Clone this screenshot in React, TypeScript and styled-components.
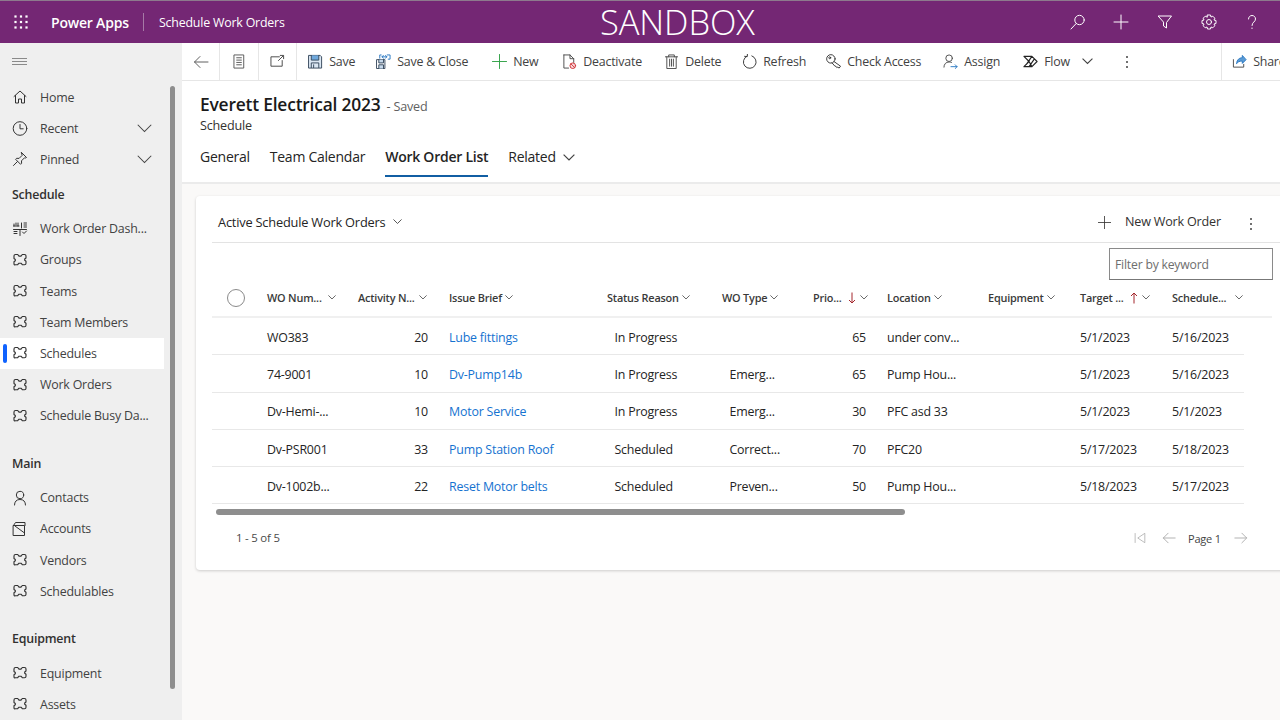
import React from "react";
import styled, { createGlobalStyle } from "styled-components";

const Global = createGlobalStyle`
  html, body { margin: 0; padding: 0; height: 100%; overflow: hidden; background: #faf9f8; }
  #root { height: 720px; width: 1280px; overflow: hidden; }
  * { box-sizing: border-box; }
`;

const Page = styled.div`
  width: 1280px; height: 720px; display: flex; flex-direction: column; overflow: hidden;
  font-family: "Open Sans", "Noto Sans", sans-serif; color: #242424; letter-spacing: -0.2px;
`;
const TopBar = styled.header`
  height: 43px; flex: none; background: #742774; border-top: 1px solid #8d7a8d; color: #fff;
  display: flex; align-items: center; position: relative;
`;
const Waffle = styled.div`width: 43px; display: flex; justify-content: center; margin-left: -1px; margin-right: 9px;`;
const Brand = styled.div`font-size: 14px; font-weight: 600; width: 92px;`;
const TopSep = styled.div`width: 1px; height: 18px; background: #a67aa6;`;
const AppName = styled.div`font-size: 12.4px; margin-left: 15px;`;
const Sandbox = styled.div`
  position: absolute; left: 600px; top: 2px; font-size: 34.5px; line-height: 38px; font-weight: 300; letter-spacing: -0.1px;
`;
const TopIcons = styled.div`margin-left: auto; display: flex; margin-right: 6px;`;
const TopIcon = styled.div`width: 43.6px; height: 42px; display: flex; align-items: center; justify-content: center;`;

const Body = styled.div`flex: 1; display: flex; min-height: 0;`;
const Side = styled.nav`width: 182px; flex: none; background: #efefef; position: relative; overflow: hidden; color: #424242;`;
const Burger = styled.div`height: 38.5px; padding-left: 12px; display: flex; align-items: center;`;
const NavRow = styled.div<{ $active?: boolean }>`
  height: 31.2px; width: 164px; display: flex; align-items: center; font-size: 12.4px; position: relative;
  padding-left: 12px; background: ${p => (p.$active ? "#fff" : "transparent")};
  ${p => p.$active ? `&::before { content: ""; position: absolute; left: 3px; top: 6px; width: 4px; height: 19px; border-radius: 2px; background: #0f62fe; }` : ""}
`;
const NavIcon = styled.span`width: 16px; height: 16px; margin-right: 12px; display: flex; align-items: center; justify-content: center; flex: none; color: #333;`;
const NavChevron = styled.span`margin-left: auto; margin-right: 12px; display: flex;`;
const NavHead = styled.div<{ $gap?: boolean }>`
  height: 38px; margin-top: ${p => (p.$gap ? 12.7 : 0)}px; padding-left: 12px; display: flex; align-items: center; font-size: 12.4px; font-weight: 600; color: #323130;
`;
const SideThumb = styled.div`position: absolute; left: 170px; top: 43px; width: 5px; height: 603px; border-radius: 3px; background: #8e8e8e;`;

const Main = styled.main`flex: 1; min-width: 0; display: flex; flex-direction: column; overflow: hidden;`;
const CmdBar = styled.div`
  height: 38px; flex: none; background: #fff; border-bottom: 1px solid #e6e6e6; display: flex; align-items: center; color: #424242; font-size: 12.4px;
`;
const NavBtn = styled.div`
  width: 38.4px; height: 37px; border-right: 1px solid #e6e6e6; display: flex; align-items: center; justify-content: center; flex: none;
`;
const CmdList = styled.div`display: flex; align-items: center; margin-left: 11px; flex: none; width: 914px;`;
const Cmd = styled.div<{ $w: number }>`width: ${p => p.$w}px; flex: none; display: flex; align-items: center; gap: 6px; white-space: nowrap;`;
const CmdChevron = styled.span`display: flex; margin-left: 6px;`;
const ShareCell = styled.div`
  height: 37px; border-left: 1px solid #e6e6e6; margin-left: -1px; padding-left: 10px; display: flex; align-items: center; gap: 6px; white-space: nowrap;
`;

const FormHead = styled.div`height: 103px; flex: none; background: #fff; border-bottom: 2px solid #ebebeb; padding: 11px 0 0 18px;`;
const TitleRow = styled.div`display: flex; align-items: baseline; height: 26px; margin-top: -1px;`;
const Title = styled.h1`margin: 0; font-size: 17.4px; font-weight: 600; color: #1a1a1a; line-height: 26px;`;
const Saved = styled.span`font-size: 12.6px; color: #616161; margin-left: 6px;`;
const Entity = styled.div`font-size: 12.6px; font-weight: 500; color: #323130; line-height: 18px;`;
const Tabs = styled.div`display: flex; gap: 20px; margin-top: 8px; height: 34px; font-size: 14px;`;
const Tab = styled.div<{ $on?: boolean }>`
  position: relative; height: 34px; display: flex; align-items: flex-start; gap: 7px; line-height: 20px; padding-top: 4px; color: #242424; font-weight: ${p => (p.$on ? 600 : 400)};
  letter-spacing: -0.25px;
  ${p => p.$on ? `&::after { content: ""; position: absolute; left: 0; right: 0; bottom: 0; height: 2px; background: #115ea3; }` : ""}
`;
const TabChevron = styled.span`display: flex; margin-top: 7px;`;

const Content = styled.div`flex: 1; background: #faf9f8; padding: 12px 0 0 14px; overflow: hidden;`;
const Card = styled.section`
  width: 1110px; height: 374px; background: #fff; border-radius: 4px 0 0 4px; box-shadow: 0 1px 3px rgba(0,0,0,.18); padding: 0 0 0 16px; position: relative;
`;
const CardHead = styled.div`
  height: 47px; border-bottom: 1px solid #e3e3e3; display: flex; align-items: center; padding: 5px 0 0 6px; font-size: 12.8px; color: #242424;
`;
const ViewName = styled.div`font-weight: 500; display: flex; align-items: center; gap: 8px;`;
const NewBtn = styled.div`position: absolute; left: 902px; top: 17px; display: flex; align-items: center; gap: 14px; color: #323130; font-size: 12.6px; line-height: 18px;`;
const CardMore = styled.div`position: absolute; left: 1053px; top: 21px; display: flex;`;
const FilterBox = styled.div`
  position: absolute; left: 913px; top: 52px; width: 164px; height: 32px; border: 1px solid #8a8a8a; border-bottom-color: #777; padding-left: 5px; display: flex; align-items: center; font-size: 12.2px; color: #6e6e6e; background: #fff;
`;
const Grid = styled.div`margin-top: 37px; width: 1032px;`;
const columns = "44px 91px 91px 158px 115px 91px 74px 101px 92px 92px 83px";
const HeadRow = styled.div`
  display: grid; grid-template-columns: ${columns}; height: 38px; width: 1060px; border-bottom: 2px solid #f0f0f0; padding-bottom: 1px; font-size: 10.9px; font-weight: 600; color: #3a3a3a; align-items: center;
`;
const HeadCell = styled.div`padding-left: 11px; display: flex; align-items: center; white-space: nowrap; position: relative;`;
const CheckCell = styled.div`display: flex; padding-left: 15px; align-items: center;`;
const Round = styled.div`width: 18px; height: 18px; border: 1px solid #8a8a8a; border-radius: 50%;`;
const Row = styled.div`
  display: grid; grid-template-columns: ${columns}; height: 37.3px; border-bottom: 1px solid #e8e8e8; font-size: 12.4px; color: #242424; align-items: center; padding-top: 2px;
`;
const Cell = styled.div<{ $indent?: boolean; $num?: boolean; $link?: boolean }>`
  white-space: nowrap; padding-left: ${p => (p.$indent ? "18.5px" : "11px")}; ${p => p.$num ? "text-align: right; padding-right: 10px;" : ""}
  color: ${p => (p.$link ? "#1572d0" : "inherit")};
`;
const HScroll = styled.div`width: 689px; height: 6px; border-radius: 3px; background: #8e8e8e; margin: 5px 0 0 4px;`;
const Pager = styled.div`
  position: absolute; left: 0; right: 0; top: 333px; display: flex; align-items: center; font-size: 11.4px; color: #4a4a4a;
`;
const Range = styled.div`margin-left: 40px; line-height: 18px;`;
const PageBtns = styled.div`position: absolute; left: 938px; top: 0; display: flex; align-items: center; font-size: 11px;`;
const PageLabel = styled.div`margin: 2px 13px 0 12px; color: #444;`;

const I = ({ s = 16, c = "currentColor", w = 1, children }: { s?: number; c?: string; w?: number; children: React.ReactNode }) => (
  <svg width={s} height={s} viewBox="0 0 16 16" fill="none" stroke={c} strokeWidth={w} strokeLinecap="round" strokeLinejoin="round">{children}</svg>
);
const Chevron = ({ s = 10, c = "#424242" }: { s?: number; c?: string }) => (
  <svg width={s} height={s * 0.6} viewBox="0 0 10 6" fill="none" stroke={c} strokeWidth={s > 12 ? 0.7 : 1}><path d="M.5.5 5 5 9.5.5" /></svg>
);
const Puzzle = () => (
  <I w={1.15}><path d="M3.500 2.500h2.200l1.300 1.600h2l1.300-1.600h2.200q1.500 0 1.500 1.500v2l-1.300 1v1.200l1.300 1v2q0 1.500-1.500 1.500h-2.200l-1.300-1.500h-2l-1.300 1.500H3.500Q2 13.200 2 11.700v-2l1.300-1V7.500L2 6.500V4q0-1.500 1.500-1.500Z" /></I>
);
const Home = () => <I><path d="M2 7.500 8 2l6 5.500M3.500 6.500V14h3v-4h3v4h3V6.500" /></I>;
const Clock = () => <I s={17}><circle cx="8" cy="8" r="6.800" /><path d="M8 4v4.300h3.200" /></I>;
const Pin = () => <I><path d="M9.500 1.500 14.500 6.500l-1 .5-1-.2-3 3 .1 2.500-1 1-5-5 1-1 2.500.1 3-3-.2-1ZM5.500 10.500 1.500 14.500" /></I>;
const Dash = () => <I><path d="M1.500 5h5.500M1.500 8.500h13M9.500 2v5M12 2h2.500M12 4h2.500M12 6h2.500M4 2v2M2 3v2M6 2v3M2 10.500h3M2 12.500h3M8 9v5.500M10.500 11l1.500 1.500 2.500-2.500" /></I>;
const Person = () => <I><circle cx="8" cy="5" r="3.700" /><path d="M2.500 15c0-3.500 2-5.500 5.500-5.500s5.500 2 5.500 5.500" /></I>;
const Account = () => <I><path d="M1.500 4.500h11v10h-11zM1.500 4.500l2-3h9.500v3M3 5l9.500 7" /></I>;

const commandItems: { label: string; w: number; icon: React.ReactNode; after?: React.ReactNode }[] = [
  { label: "Save", w: 68, icon: <I s={15}><path d="M1 1.500h12l1.500 1.500v12H1z" stroke="#35475c" fill="#dbe7f3" /><path d="M3.500 1.500v5h8v-5" fill="#6fa8dc" stroke="#35475c" /><path d="M3.500 14.500V9.500h8v5M6 11.500v3" stroke="#35475c" /></I> },
  { label: "Save & Close", w: 116, icon: <I s={15}><path d="M1 6h8.500v9.500H1z" stroke="#35475c" /><path d="M3 6v3.500h5V6M3 15.500v-4h5v4" stroke="#35475c" fill="#c6d8ea" /><path d="M4 4.500V1h1.500M12 1h3v4.500h-2M6.500 3h5M7.800 1.500 6.500 3l1.300 1.500M10.200 1.500 11.500 3l-1.300 1.500" stroke="#2b79c2" /></I> },
  { label: "New", w: 70, icon: <I s={15}><path d="M8 .5v15M.5 8h15" stroke="#2ea043" /></I> },
  { label: "Deactivate", w: 102, icon: <I s={15}><path d="M2 1h6.500L12.500 5v4M2 1v14h5M8.500 1v4h4" stroke="#4a4a4a" /><circle cx="11.500" cy="12.500" r="3" stroke="#d13438" fill="#f8d7da" /><path d="m9.500 10.500 4 4" stroke="#d13438" /></I> },
  { label: "Delete", w: 78, icon: <I s={15}><path d="M1.500 3h13M5 3V1h6v2M3 3v12.500h10V3M6 5.500v7.500M8 5.500v7.500M10 5.500v7.500" stroke="#4a4a4a" /></I> },
  { label: "Refresh", w: 84, icon: <I s={15}><path d="M5.500 2.200A6.800 6.800 0 1 0 10.500 2M5.800 0 5.500 2.800 2.800 2.500" stroke="#333" /></I> },
  { label: "Check Access", w: 117, icon: <I s={15}><circle cx="5.200" cy="5.200" r="4.500" stroke="#333" /><circle cx="4" cy="4" r="1" stroke="#333" /><path d="m8.500 8 7 5-1.500 2-1.500-1-1 .5-1-1.500-1 0-3-3.500" stroke="#333" /></I> },
  { label: "Assign", w: 80, icon: <I s={15}><circle cx="6.500" cy="4.500" r="3.500" stroke="#4a4a4a" /><path d="M1 14c0-3 2-5.500 5.500-5.500 1 0 1.700.200 2.500.500" stroke="#4a4a4a" /><path d="M8.500 13.500h6.500M13 11.500l2 2-2 2" stroke="#2b79c2" /></I> },
  { label: "Flow", w: 102, icon: <I s={15} w={1.2}><path d="M1 2.500h8.500l5.500 5.500-5.500 5.500H1l5.500-5.500zM9.500 2.500 3.800 10.800M9.500 13.500 6.500 8M12 5.500 6.500 13.500" stroke="#222" /></I>,
    after: <CmdChevron><Chevron s={11} /></CmdChevron> },
];

const rows = [
  ["WO383", "20", "Lube fittings", "In Progress", "", "65", "under conv...", "", "5/1/2023", "5/16/2023"],
  ["74-9001", "10", "Dv-Pump14b", "In Progress", "Emerg...", "65", "Pump Hou...", "", "5/1/2023", "5/16/2023"],
  ["Dv-Hemi-...", "10", "Motor Service", "In Progress", "Emerg...", "30", "PFC asd 33", "", "5/1/2023", "5/1/2023"],
  ["Dv-PSR001", "33", "Pump Station Roof", "Scheduled", "Correct...", "70", "PFC20", "", "5/17/2023", "5/18/2023"],
  ["Dv-1002b...", "22", "Reset Motor belts", "Scheduled", "Preven...", "50", "Pump Hou...", "", "5/18/2023", "5/17/2023"],
];

const HeadGap = styled.span<{ $w: number }>`width: ${p => p.$w}px;`;
const PageGap = styled.span`width: 16px;`;
const SortArrow = styled.svg`margin-left: 5px; margin-right: 3px;`;

const heads: { t: string; gap: number; arrow?: "up" | "down" }[] = [
  { t: "WO Num...", gap: 6 }, { t: "Activity N...", gap: 4 }, { t: "Issue Brief", gap: 3 }, { t: "Status Reason", gap: 3 }, { t: "WO Type", gap: 3 },
  { t: "Prio...", gap: 3, arrow: "down" }, { t: "Location", gap: 3 }, { t: "Equipment", gap: 3 }, { t: "Target ...", gap: 3, arrow: "up" }, { t: "Schedule...", gap: 9 },
];

const Arrow = ({ dir }: { dir: "up" | "down" }) => (
  <SortArrow width="10" height="12" viewBox="0 0 10 12" fill="none" stroke="#a4262c" strokeWidth="1">
    {dir === "down" ? <path d="M5 .5v10.500M2 8l3 3 3-3" /> : <path d="M5 11.500V1M2 4l3-3 3 3" />}
  </SortArrow>
);

const Line = ({ d, c = "#a8a8a8", s = 16 }: { d: string; c?: string; s?: number }) => <I s={s} c={c}><path d={d} /></I>;

const Dots = ({ c = "#424242" }: { c?: string }) => (
  <svg width="4" height="14" viewBox="0 0 4 14" fill={c}><circle cx="2" cy="2" r="1" /><circle cx="2" cy="7" r="1" /><circle cx="2" cy="12" r="1" /></svg>
);

export default function App() {
  return (
    <Page>
      <Global />
      <TopBar>
        <Waffle>
          <svg width="14" height="14" viewBox="0 0 14 14" fill="#fff">
            {[1.5, 7, 12.5].flatMap(x => [1.5, 7, 12.5].map(y => <rect key={`${x}-${y}`} x={x - 1.1} y={y - 1.1} width="2.2" height="2.2" />))}
          </svg>
        </Waffle>
        <Brand>Power Apps</Brand>
        <TopSep />
        <AppName>Schedule Work Orders</AppName>
        <Sandbox>SANDBOX</Sandbox>
        <TopIcons>
          <TopIcon><I c="#fff"><circle cx="9.500" cy="6" r="4.700" /><path d="M6.200 9.500 1 15" /></I></TopIcon>
          <TopIcon><I c="#fff"><path d="M8 1v14M1 8h14" /></I></TopIcon>
          <TopIcon><I c="#fff"><path d="M1.500 2h13L9.500 8.500V14l-3-2V8.500z" /></I></TopIcon>
          <TopIcon><I c="#fff"><circle cx="8" cy="8" r="2.500" /><path d="M6.500 1h3l.5 2 1.800-.8 2 2L13 6l2 .5v3L13 10l.8 1.800-2 2L10 13l-.5 2h-3L6 13l-1.800.8-2-2L3 10l-2-.5v-3L3 6l-.8-1.800 2-2L6 3z" /></I></TopIcon>
          <TopIcon><I c="#fff"><path d="M4.500 5C4.500 3 6 1.500 8 1.500S11.500 3 11.500 5c0 3-3.500 3-3.500 6.500M8 14v.5" /></I></TopIcon>
        </TopIcons>
      </TopBar>
      <Body>
        <Side>
          <Burger>
            <svg width="15" height="10" viewBox="0 0 15 10" stroke="#8a8a8a" strokeWidth="1"><path d="M0 1.500h15M0 4.500h15M0 7.500h15" /></svg>
          </Burger>
          <NavRow><NavIcon><Home /></NavIcon>Home</NavRow>
          <NavRow><NavIcon><Clock /></NavIcon>Recent<NavChevron><Chevron s={15} /></NavChevron></NavRow>
          <NavRow><NavIcon><Pin /></NavIcon>Pinned<NavChevron><Chevron s={15} /></NavChevron></NavRow>
          <NavHead>Schedule</NavHead>
          <NavRow><NavIcon><Dash /></NavIcon>Work Order Dash...</NavRow>
          <NavRow><NavIcon><Puzzle /></NavIcon>Groups</NavRow>
          <NavRow><NavIcon><Puzzle /></NavIcon>Teams</NavRow>
          <NavRow><NavIcon><Puzzle /></NavIcon>Team Members</NavRow>
          <NavRow $active><NavIcon><Puzzle /></NavIcon>Schedules</NavRow>
          <NavRow><NavIcon><Puzzle /></NavIcon>Work Orders</NavRow>
          <NavRow><NavIcon><Puzzle /></NavIcon>Schedule Busy Da...</NavRow>
          <NavHead $gap>Main</NavHead>
          <NavRow><NavIcon><Person /></NavIcon>Contacts</NavRow>
          <NavRow><NavIcon><Account /></NavIcon>Accounts</NavRow>
          <NavRow><NavIcon><Puzzle /></NavIcon>Vendors</NavRow>
          <NavRow><NavIcon><Puzzle /></NavIcon>Schedulables</NavRow>
          <NavHead $gap>Equipment</NavHead>
          <NavRow><NavIcon><Puzzle /></NavIcon>Equipment</NavRow>
          <NavRow><NavIcon><Puzzle /></NavIcon>Assets</NavRow>
          <SideThumb />
        </Side>
        <Main>
          <CmdBar>
            <NavBtn><Line c="#616161" d="M15 8H1.500M7 2.500 1.500 8 7 13.500" /></NavBtn>
            <NavBtn><I s={15} c="#555"><path d="M2.500 1h10v14h-10zM5 4h5M5 6.500h5M5 9h5M5 11.500h5" /></I></NavBtn>
            <NavBtn><I s={15} c="#444"><path d="M10 3H1v10h12V7M9 7l5-5M11 1.500h3.500V5" /></I></NavBtn>
            <CmdList>
              {commandItems.map(c => (
                <Cmd key={c.label} $w={c.w}>{c.icon}{c.label}{c.after}</Cmd>
              ))}
              <Dots />
            </CmdList>
            <ShareCell>
              <I s={15}><path d="M1.500 6v8h11v-3" stroke="#4a4a4a" /><path d="M5 10c0-4 3-6 6-6V1.500L15 6l-4 4V7.500c-3 0-5 1-6 2.500Z" fill="#5b9bd5" stroke="#2b79c2" /></I>
              Share
            </ShareCell>
          </CmdBar>
          <FormHead>
            <TitleRow><Title>Everett Electrical 2023</Title><Saved>- Saved</Saved></TitleRow>
            <Entity>Schedule</Entity>
            <Tabs>
              <Tab>General</Tab>
              <Tab>Team Calendar</Tab>
              <Tab $on>Work Order List</Tab>
              <Tab>Related<TabChevron><Chevron s={12} /></TabChevron></Tab>
            </Tabs>
          </FormHead>
          <Content>
            <Card>
              <CardHead>
                <ViewName>Active Schedule Work Orders<Chevron s={9} /></ViewName>
              </CardHead>
              <NewBtn><I s={13}><path d="M8 0v16M0 8h16" /></I>New Work Order</NewBtn>
              <CardMore><Dots /></CardMore>
              <FilterBox>Filter by keyword</FilterBox>
              <Grid>
                <HeadRow>
                  <CheckCell><Round /></CheckCell>
                  {heads.map(h => (
                    <HeadCell key={h.t}>
                      {h.t}
                      {h.arrow ? <Arrow dir={h.arrow} /> : <HeadGap $w={h.gap} />}
                      <Chevron s={8} />
                    </HeadCell>
                  ))}
                </HeadRow>
                {rows.map(r => (
                  <Row key={r[0]}>
                    <span />
                    <Cell>{r[0]}</Cell>
                    <Cell $num>{r[1]}</Cell>
                    <Cell $link>{r[2]}</Cell>
                    <Cell $indent>{r[3]}</Cell>
                    <Cell $indent>{r[4]}</Cell>
                    <Cell $num>{r[5]}</Cell>
                    <Cell>{r[6]}</Cell>
                    <Cell>{r[7]}</Cell>
                    <Cell>{r[8]}</Cell>
                    <Cell>{r[9]}</Cell>
                  </Row>
                ))}
                <HScroll />
              </Grid>
              <Pager>
                <Range>1 - 5 of 5</Range>
                <PageBtns>
                  <Line s={12} d="M1.500 2v12M14 2 5 8l9 6z" />
                  <PageGap />
                  <Line s={14} d="M15 8H1.500M7 2.500 1.500 8 7 13.500" />
                  <PageLabel>Page 1</PageLabel>
                  <Line s={14} d="M1 8h13.500M9 2.500 14.500 8 9 13.500" />
                </PageBtns>
              </Pager>
            </Card>
          </Content>
        </Main>
      </Body>
    </Page>
  );
}
